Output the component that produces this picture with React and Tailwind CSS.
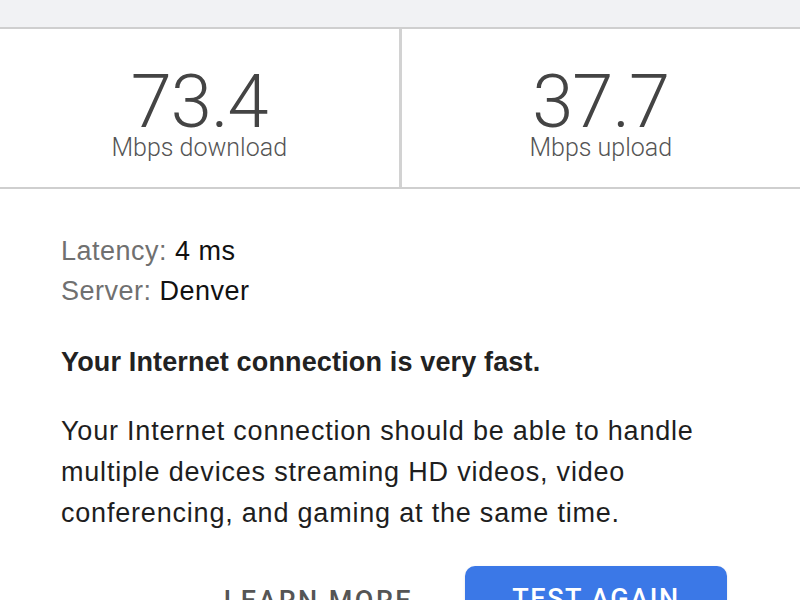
import React from 'react';

// One speed figure with its label
const Stat = ({ value, label }) => (
  <div className="flex-1 flex flex-col items-center pt-[40px]">
    <span className="text-[74px] leading-[62px] font-light text-[#444444] tracking-[-1px] pt-[2px]">{value}</span>
    <span className="text-[25px] leading-[26px] font-light text-[#555555] mt-[2px]">{label}</span>
  </div>
);

const App = () => {
  return (
    <div
      className="w-[800px] h-[600px] overflow-hidden bg-white"
      style={{ fontFamily: 'Roboto, "Liberation Sans", sans-serif' }}
    >
      <div className="h-[27px] bg-[#f1f2f4]" />
      <div className="flex h-[162px] border-y-2 border-[#cfcfcf]">
        <Stat value="73.4" label="Mbps download" />
        <div className="w-[3px] bg-[#d2d2d2]" />
        <Stat value="37.7" label="Mbps upload" />
      </div>

      <div
        className="pl-[61px] pr-[40px] pt-[42px]"
        style={{ fontFamily: '"Liberation Sans", Arial, sans-serif' }}
      >
        <div className="text-[27px] leading-[40px] tracking-[0.5px]">
          <div>
            <span className="text-[#707070]">Latency: </span>
            <span className="text-[#111111]">4 ms</span>
          </div>
          <div>
            <span className="text-[#707070]">Server: </span>
            <span className="text-[#111111]">Denver</span>
          </div>
        </div>

        <p className="mt-[31px] text-[27px] leading-[40px] font-bold tracking-[0.15px] text-[#222222]">
          Your Internet connection is very fast.
        </p>

        <p className="mt-[29px] text-[27px] leading-[41px] tracking-[0.8px] text-[#1e1e1e] w-[680px]">
          Your Internet connection should be able to handle multiple devices streaming HD videos, video
          conferencing, and gaming at the same time.
        </p>

        <div
          className="flex justify-end items-start gap-[52px] mt-[32px] pr-[33px]"
          style={{ fontFamily: 'Roboto, "Liberation Sans", sans-serif' }}
        >
          <button className="mt-[15px] text-[27px] font-medium tracking-[0.09em] text-[#555555] uppercase">
            Learn more
          </button>
          <button className="w-[262px] h-[64px] pt-[2px] rounded-[10px] bg-[#3b78e7] text-white text-[27px] font-medium tracking-[0.06em] uppercase shadow">
            Test again
          </button>
        </div>
      </div>
    </div>
  );
};

export default App;
